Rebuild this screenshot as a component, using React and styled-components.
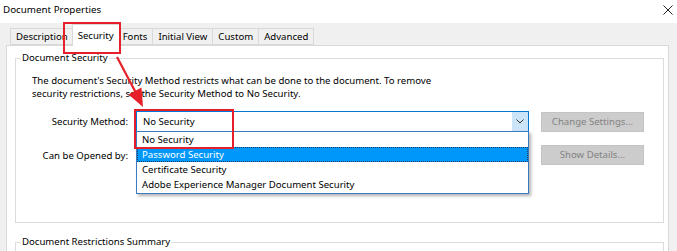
import React from "react";
import styled, { createGlobalStyle } from "styled-components";

const GlobalStyle = createGlobalStyle`
  body {
    margin: 0;
    font-family: "Noto Sans", "Open Sans", sans-serif;
    font-size: 9.6px;
    color: #000;
  }
`;

const Page = styled.div`
  position: relative;
  width: 677px;
  height: 251px;
  overflow: hidden;
  background: #f0f0f0;
`;

const TitleBar = styled.div`
  height: 23px;
  background: #fff;
  display: flex;
  align-items: flex-start;
  justify-content: space-between;
  padding: 0 4px 0 3px;
  box-sizing: border-box;
  font-size: 9.8px;
  line-height: 20px;
`;

const CloseButton = styled.div`
  width: 10px;
  height: 10px;
  margin-top: 5px;
  display: flex;
`;

const Body = styled.div`
  padding: 0 8px 0 6px;
`;

const TabStrip = styled.div`
  height: 22px;
  display: flex;
  align-items: flex-end;
  padding-left: 4px;
`;

const Tab = styled.div`
  position: relative;
  box-sizing: border-box;
  height: ${(p) => (p.active ? "22px" : "17px")};
  margin: ${(p) => (p.active ? "0 -2px -1px -2px" : "0")};
  padding: ${(p) => (p.active ? "4px 5px 0" : "1px 5px 0")};
  background: ${(p) => (p.active ? "#fff" : "#f0f0f0")};
  border: 1px solid #d9d9d9;
  border-bottom: ${(p) => (p.active ? "none" : "1px solid #d9d9d9")};
  border-left-width: ${(p) => (p.first || p.active ? "1px" : "0")};
  z-index: ${(p) => (p.active ? 2 : 1)};
  line-height: 14px;
  white-space: nowrap;
`;

const Panel = styled.div`
  position: relative;
  background: #fff;
  border: 1px solid #d9d9d9;
  padding: 5px 4px 0 8px;
  height: 220px;
`;

const Group = styled.fieldset`
  margin: 0;
  padding: 0;
  min-width: 0;
  border: 1px solid #dcdcdc;
  & + & {
    margin-top: 12px;
  }
`;

const Legend = styled.legend`
  margin-left: 5px;
  padding: 0 1px;
  line-height: 14px;
`;

const GroupBody = styled.div`
  box-sizing: border-box;
  height: ${(p) => p.height || 157}px;
  padding: 9px 0 0 16px;
`;

const Note = styled.p`
  margin: 0;
  line-height: 13px;
`;

const FormRows = styled.div`
  margin-top: 11px;
  display: flex;
  flex-direction: column;
  gap: 13px;
`;

const Row = styled.div`
  display: flex;
  align-items: center;
  height: ${(p) => p.h}px;
`;

const Label = styled.div`
  width: 96px;
  margin-right: 8px;
  text-align: right;
  white-space: nowrap;
`;

const Combo = styled.div`
  position: relative;
  box-sizing: border-box;
  width: 393px;
  height: 21px;
  border: 1px solid #0078d7;
  display: flex;
  align-items: center;
  z-index: 3;
`;

const ComboValue = styled.div`
  flex: 1;
  padding-left: 6px;
`;

const ComboArrow = styled.div`
  width: 16px;
  align-self: stretch;
  background: #cce4f7;
  display: flex;
  align-items: center;
  justify-content: center;
`;

const DropList = styled.div`
  position: absolute;
  top: 100%;
  left: -1px;
  right: -1px;
  background: #fff;
  border: 1px solid #3a7cc2;
  box-shadow: 2px 2px 3px rgba(0, 0, 0, 0.3);
  padding: 0 0 1px;
`;

const Option = styled.div`
  box-sizing: border-box;
  height: 15px;
  line-height: 15px;
  padding-left: 5px;
  color: ${(p) => (p.selected ? "#fff" : "#000")};
  background: ${(p) => (p.selected ? "#0097fb" : "transparent")};
  outline: ${(p) => (p.selected ? "1px dotted #1a3f66" : "none")};
  outline-offset: -1px;
  white-space: nowrap;
`;

const Button = styled.div`
  box-sizing: border-box;
  width: 103px;
  height: 20px;
  margin-left: ${(p) => p.offset}px;
  background: #cccccc;
  border: 1px solid #c4c4c4;
  color: #838383;
  text-align: center;
  line-height: 18px;
  white-space: nowrap;
`;

const MarkBox = styled.div`
  position: absolute;
  box-sizing: border-box;
  border: 2px solid #e5202a;
  z-index: 5;
  pointer-events: none;
`;

const Overlay = styled.svg`
  position: absolute;
  left: 0;
  top: 0;
  z-index: 6;
  pointer-events: none;
`;

const tabs = ["Description", "Security", "Fonts", "Initial View", "Custom", "Advanced"];
const methods = [
  "No Security",
  "Password Security",
  "Certificate Security",
  "Adobe Experience Manager Document Security",
];

export default function App() {
  return (
    <>
      <GlobalStyle />
      <Page>
        <TitleBar>
          <span>Document Properties</span>
          <CloseButton>
            <svg width="10" height="10" viewBox="0 0 10 10">
              <path d="M0.5 0.5 L9.5 9.5 M9.5 0.5 L0.5 9.5" stroke="#222" strokeWidth="1" />
            </svg>
          </CloseButton>
        </TitleBar>
        <Body>
          <TabStrip>
            {tabs.map((t, i) => (
              <Tab key={t} active={t === "Security"} first={i === 0}>
                {t}
              </Tab>
            ))}
          </TabStrip>
          <Panel>
            <Group>
              <Legend>Document Security</Legend>
              <GroupBody>
                <Note>
                  The document's Security Method restricts what can be done to the document. To remove
                  <br />
                  security restrictions, set the Security Method to No Security.
                </Note>
                <FormRows>
                  <Row h={21}>
                    <Label>Security Method:</Label>
                    <Combo>
                      <ComboValue>No Security</ComboValue>
                      <ComboArrow>
                        <svg width="8" height="5" viewBox="0 0 8 5">
                          <path d="M0.5 0.5 L4 4 L7.5 0.5" fill="none" stroke="#333" strokeWidth="1" />
                        </svg>
                      </ComboArrow>
                      <DropList>
                        {methods.map((m) => (
                          <Option key={m} selected={m === "Password Security"}>
                            {m}
                          </Option>
                        ))}
                      </DropList>
                    </Combo>
                    <Button offset={12}>Change Settings...</Button>
                  </Row>
                  <Row h={20}>
                    <Label>Can be Opened by:</Label>
                    <Button offset={405}>Show Details...</Button>
                  </Row>
                </FormRows>
              </GroupBody>
            </Group>
            <Group>
              <Legend>Document Restrictions Summary</Legend>
              <GroupBody height={40} />
            </Group>
          </Panel>
        </Body>
        <MarkBox style={{ left: 63, top: 22, width: 58, height: 32 }} />
        <MarkBox style={{ left: 134, top: 109, width: 100, height: 40 }} />
        <Overlay width="677" height="251">
          <line x1="117" y1="57" x2="136" y2="93" stroke="#e5202a" strokeWidth="2.2" />
          <polygon points="143,107 128.5,94.5 141.5,87.5" fill="#e5202a" />
        </Overlay>
      </Page>
    </>
  );
}
